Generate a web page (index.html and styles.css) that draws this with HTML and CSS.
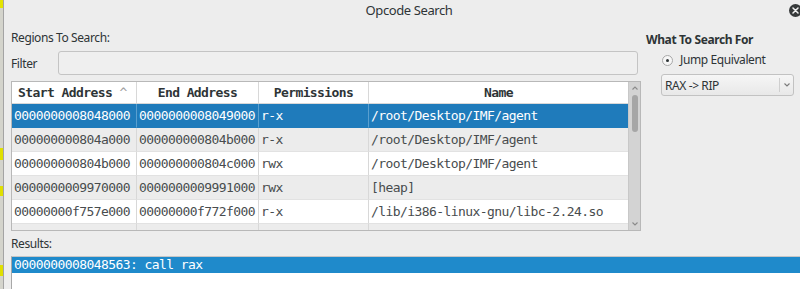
FILE: index.html
```html
<!DOCTYPE html>
<html lang="en">

<head>
  <meta charset="UTF-8">
  <title>Opcode Search</title>
  <link rel="stylesheet" href="styles.css">
</head>

<body>
  <div class="edge"></div>
  <div class="window">
    <div class="titlebar">
      <span class="title">Opcode Search</span>
      <span class="close">
        <svg width="7" height="7" viewBox="0 0 7 7">
          <path d="M1 1 L6 6 M6 1 L1 6" stroke="#f2f2f2" stroke-width="1.5" stroke-linecap="round"/>
        </svg>
      </span>
    </div>

    <div class="main">
      <div class="regions">
        <div class="label">Regions To Search:</div>
        <div class="filter-row">
          <span class="filter-label">Filter</span>
          <div class="filter-input"></div>
        </div>

        <div class="table">
          <div class="grid">
            <div class="th left">Start Address <span class="sort">^</span></div>
            <div class="th">End Address</div>
            <div class="th">Permissions</div>
            <div class="th last">Name</div>

            <div class="td sel">0000000008048000</div>
            <div class="td sel">0000000008049000</div>
            <div class="td sel">r-x</div>
            <div class="td sel last">/root/Desktop/IMF/agent</div>

            <div class="td alt">000000000804a000</div>
            <div class="td alt">000000000804b000</div>
            <div class="td alt">r-x</div>
            <div class="td alt last">/root/Desktop/IMF/agent</div>

            <div class="td">000000000804b000</div>
            <div class="td">000000000804c000</div>
            <div class="td">rwx</div>
            <div class="td last">/root/Desktop/IMF/agent</div>

            <div class="td alt">0000000009970000</div>
            <div class="td alt">0000000009991000</div>
            <div class="td alt">rwx</div>
            <div class="td alt last">[heap]</div>

            <div class="td">00000000f757e000</div>
            <div class="td">00000000f772f000</div>
            <div class="td">r-x</div>
            <div class="td last">/lib/i386-linux-gnu/libc-2.24.so</div>

            <div class="td alt"></div>
            <div class="td alt"></div>
            <div class="td alt"></div>
            <div class="td alt last"></div>
          </div>
          <div class="scrollbar">
            <svg class="arrow" width="8" height="6" viewBox="0 0 8 6"><path d="M1.5 4.5 L4 2 L6.5 4.5" fill="none" stroke="#8a8a8a" stroke-width="1.1"/></svg>
            <div class="thumb"></div>
            <svg class="arrow down" width="8" height="6" viewBox="0 0 8 6"><path d="M1.5 1.5 L4 4 L6.5 1.5" fill="none" stroke="#8a8a8a" stroke-width="1.1"/></svg>
          </div>
        </div>
      </div>

      <div class="options">
        <div class="label bold">What To Search For</div>
        <div class="radio-row">
          <span class="radio"><span class="dot"></span></span>
          <span><u>J</u>ump Equivalent</span>
        </div>
        <div class="combo">
          <span class="combo-text">RAX -&gt; RIP</span>
          <span class="combo-btn">
            <svg width="8" height="6" viewBox="0 0 8 6"><path d="M1.5 1.5 L4 4 L6.5 1.5" fill="none" stroke="#7a7a7a" stroke-width="1.1"/></svg>
          </span>
        </div>
      </div>
    </div>

    <div class="label results-label">Results:</div>
    <div class="results">
      <div class="result sel">0000000008048563: call rax</div>
    </div>
  </div>
</body>

</html>
```

FILE: styles.css
```css
html,
body {
  margin: 0;
  height: 289px;
  overflow: hidden;
}

body {
  display: flex;
  background: #ededed;
  font-family: "Noto Sans", sans-serif;
  font-size: 12px;
  letter-spacing: -0.4px;
  color: #2e3436;
}

.edge {
  width: 3px;
  flex: none;
  background: linear-gradient(#e4e400 0, #e4e400 8px, #d4d4cc 8px, #d4d4cc 148px, #e0e000 148px, #e0e000 160px,
      #d4d4cc 160px, #d4d4cc 186px, #e0e000 186px, #e0e000 196px, #d4d4cc 196px, #d4d4cc 265px, #e0e000 265px,
      #e0e000 276px, #d4d4cc 276px);
}

.window {
  flex: 1;
  min-width: 0;
  border-left: 1px solid #a4a4a4;
  padding-left: 7px;
}

.titlebar {
  display: flex;
  align-items: center;
  height: 20px;
  font-size: 13px;
}

.title {
  flex: 1;
  text-align: center;
  padding-left: 18px;
}

.close {
  flex: none;
  width: 13px;
  height: 13px;
  margin-right: -2px;
  border-radius: 50%;
  background: #36393a;
  display: flex;
  align-items: center;
  justify-content: center;
}

.close svg {
  display: block;
}

.main {
  display: flex;
  gap: 5px;
}

.label {
  line-height: 16px;
}

.bold {
  font-weight: bold;
}

.regions {
  width: 630px;
  flex: none;
}

.regions > .label {
  margin-top: 10px;
}

.filter-row {
  display: flex;
  align-items: center;
  margin-top: 5px;
}

.filter-label {
  width: 47px;
}

.filter-input {
  width: 578px;
  height: 22px;
  border: 1px solid #c4c4c4;
  border-radius: 3px;
  background: #efefef;
}

.table {
  display: flex;
  margin-top: 6px;
  height: 148px;
  border: 1px solid #b8b8b8;
  background: #fff;
  overflow: hidden;
}

.grid {
  display: grid;
  grid-template-columns: 125px 122px 110px 259px;
  grid-auto-rows: 24px;
  grid-template-rows: 22px;
  font-family: "DejaVu Sans Mono", monospace;
  font-size: 13px;
  letter-spacing: -0.58px;
}

.th {
  font-weight: bold;
  text-align: center;
  line-height: 21px;
  background: #fff;
  border-right: 1px solid #d8d8d8;
  border-bottom: 1px solid #d8d8d8;
}

.th.left {
  text-align: left;
  padding-left: 6px;
}

.sort {
  color: #9a9a9a;
  font-weight: normal;
}

.td {
  line-height: 23px;
  padding-left: 2px;
  white-space: nowrap;
  overflow: hidden;
  color: #484c4e;
  border-right: 1px solid #d8d8d8;
  border-bottom: 1px solid #e2e2e2;
  background: #fff;
}

.last {
  border-right: none;
}

.td.alt {
  background: #ececec;
}

.td.sel {
  background: #1f7bbb;
  color: #fff;
  border-right-color: #5a9fcf;
  border-bottom-color: #1f7bbb;
}

.scrollbar {
  width: 11px;
  flex: none;
  border-left: 1px solid #c8c8c8;
  background: #d3d3d3;
  display: flex;
  flex-direction: column;
  align-items: center;
}

.arrow {
  margin-top: 3px;
  display: block;
}

.arrow.down {
  margin-top: auto;
  margin-bottom: 3px;
}

.thumb {
  width: 6px;
  height: 37px;
  margin-top: 4px;
  border-radius: 3px;
  background: #a6a6a6;
}

.options {
  flex: 1;
}

.options > .label {
  margin-top: 12px;
}

.radio-row {
  display: flex;
  align-items: center;
  gap: 7px;
  margin-top: 4px;
  margin-left: 16px;
  line-height: 16px;
}

.radio {
  width: 9px;
  height: 9px;
  border: 1px solid #a8a8a8;
  border-radius: 50%;
  background: #f6f6f6;
  display: flex;
  align-items: center;
  justify-content: center;
}

.dot {
  width: 3px;
  height: 3px;
  border-radius: 50%;
  background: #2e3436;
}

.combo {
  display: flex;
  align-items: center;
  width: 131px;
  height: 20px;
  margin-top: 6px;
  margin-left: 15px;
  border: 1px solid #c2c2c2;
  border-radius: 3px;
  background: linear-gradient(#f6f6f6, #e8e8e8);
}

.combo-text {
  flex: 1;
  padding-left: 3px;
}

.combo-btn {
  width: 13px;
  height: 14px;
  border-left: 1px solid #cfcfcf;
  display: flex;
  align-items: center;
  justify-content: center;
}

.results-label {
  margin-top: 5px;
}

.results {
  margin-top: 4px;
  height: 40px;
  border-top: 1px solid #c6c6c6;
  border-left: 1px solid #a8a8a8;
  background: #fff;
}

.result {
  height: 16px;
  line-height: 16px;
  padding-left: 2px;
  font-family: "DejaVu Sans Mono", monospace;
  font-size: 13px;
  letter-spacing: -0.58px;
}

.result.sel {
  background: #1f8acb;
  color: #fff;
}
```
